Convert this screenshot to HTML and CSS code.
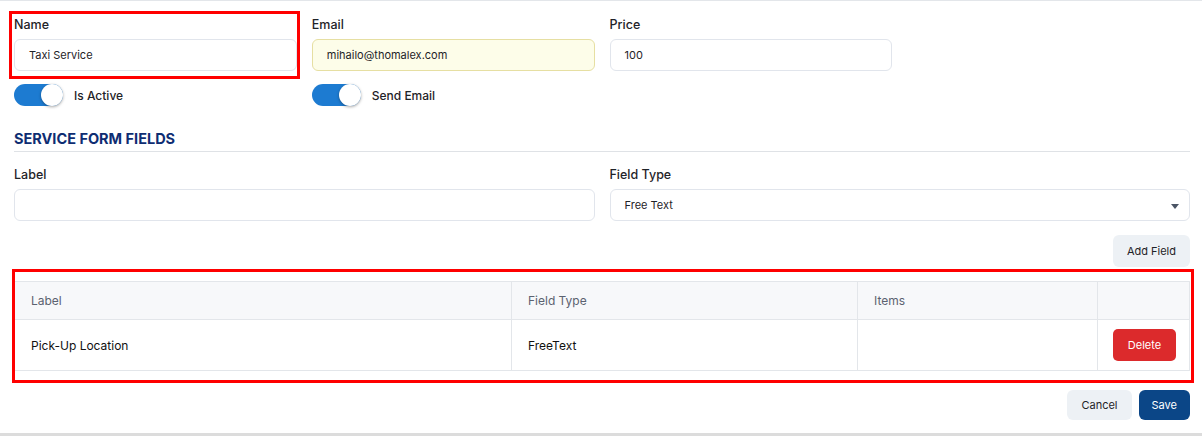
FILE: index.html
```html
<!DOCTYPE html>
<html lang="en">
<head>
    <meta charset="UTF-8">
    <title>Service</title>
    <link rel="stylesheet" href="styles.css">
</head>
<body>
    <div class="card">
        <div class="row four">
            <div class="field marked">
                <label>Name</label>
                <div class="input">Taxi Service</div>
            </div>
            <div class="field">
                <label>Email</label>
                <div class="input autofill">mihailo@thomalex.com</div>
            </div>
            <div class="field">
                <label>Price</label>
                <div class="input">100</div>
            </div>
        </div>

        <div class="row four toggles">
            <div class="switch-line"><span class="switch on"></span>Is Active</div>
            <div class="switch-line"><span class="switch on"></span>Send Email</div>
        </div>

        <h3 class="section">SERVICE FORM FIELDS</h3>

        <div class="row two">
            <div class="field">
                <label>Label</label>
                <div class="input"></div>
            </div>
            <div class="field">
                <label>Field Type</label>
                <div class="input select">Free Text<span class="caret"></span></div>
            </div>
        </div>

        <div class="actions add">
            <button class="btn light">Add Field</button>
        </div>

        <div class="table-wrap">
            <table class="grid">
                <colgroup>
                    <col style="width:497px">
                    <col style="width:346px">
                    <col style="width:240px">
                    <col>
                </colgroup>
                <thead>
                    <tr><th>Label</th><th>Field Type</th><th>Items</th><th></th></tr>
                </thead>
                <tbody>
                    <tr>
                        <td>Pick-Up Location</td>
                        <td>FreeText</td>
                        <td></td>
                        <td class="act"><button class="btn danger">Delete</button></td>
                    </tr>
                </tbody>
            </table>
        </div>

        <div class="actions footer">
            <button class="btn light">Cancel</button>
            <button class="btn primary">Save</button>
        </div>
    </div>
</body>
</html>
```

FILE: styles.css
```css
*{
    margin: 0;
    padding: 0;
    box-sizing: border-box;
}
body{
    font-family: Inter, "Noto Sans", sans-serif;
    color: #1f2328;
    background: #fff;
}
.card{
    width: 1202px;
    height: 436px;
    border-top: 1px solid #e3e6ea;
    border-bottom: 3px solid #dcdcdc;
    padding: 16px 12px 0 14px;
}
.row{
    display: grid;
    column-gap: 15px;
}
.four{
    grid-template-columns: repeat(4, 1fr);
}
.two{
    grid-template-columns: 1fr 1fr;
}
.field{
    position: relative;
}
.field label{
    display: block;
    font-size: 12.5px;
    font-weight: 500;
    line-height: 16px;
    margin-bottom: 6px;
}
.input{
    height: 32px;
    border: 1px solid #e1e5ec;
    border-radius: 6px;
    padding: 0 14px;
    font-size: 11px;
    line-height: 30px;
    color: #1f2328;
    background: #fff;
}
.autofill{
    background: #fdfde9;
    border-color: #e6dfa2;
}
.select{
    position: relative;
}
.caret{
    position: absolute;
    right: 10px;
    top: 14px;
    border-left: 4px solid transparent;
    border-right: 4px solid transparent;
    border-top: 5px solid #4b5565;
}
.marked::after{
    content: "";
    position: absolute;
    left: -5px;
    right: -3px;
    top: -6px;
    bottom: -8px;
    border: 3px solid #f00;
}
.toggles{
    margin-top: 13px;
}
.switch-line{
    display: flex;
    align-items: center;
    font-size: 12px;
    font-weight: 500;
    height: 22px;
}
.switch{
    position: relative;
    width: 49px;
    height: 22px;
    border-radius: 11px;
    background: #1d7bd1;
    margin-right: 11px;
}
.switch.on::after{
    content: "";
    position: absolute;
    right: 0;
    top: 0;
    width: 22px;
    height: 22px;
    border-radius: 50%;
    background: #fff;
    box-shadow: 0 1px 3px rgba(0,0,0,.35);
}
.section{
    margin-top: 23px;
    padding-bottom: 3px;
    border-bottom: 1px solid #dfe2e6;
    font-size: 14.5px;
    font-weight: 700;
    line-height: 19px;
    color: #0e2d72;
    margin-bottom: 15px;
}
.actions{
    display: flex;
    justify-content: flex-end;
    gap: 7px;
}
.add{
    margin-top: 14px;
}
.btn{
    border: none;
    border-radius: 6px;
    font-family: inherit;
    font-size: 11px;
    height: 32px;
    padding: 0 14px;
    cursor: pointer;
}
.btn.light{
    background: #edf1f5;
    color: #1f2328;
}
.btn.primary{
    background: #0b4687;
    color: #fff;
    padding: 0 13px;
}
.btn.danger{
    background: #dc2a2c;
    color: #fff;
    width: 63px;
    padding: 0;
    border-radius: 5px;
}
.table-wrap{
    position: relative;
    margin-top: 14px;
}
.table-wrap::after{
    content: "";
    position: absolute;
    left: -2px;
    right: -4px;
    top: -12px;
    bottom: -12px;
    border: 3px solid #f00;
}
.grid{
    width: 100%;
    table-layout: fixed;
    border-collapse: collapse;
    border: 1px solid #e3e6ea;
    font-size: 12px;
}
.grid th{
    height: 38px;
    background: #f7f8fa;
    color: #5b6270;
    font-weight: 400;
    text-align: left;
    padding: 0 16px;
    border: 1px solid #e3e6ea;
}
.grid td{
    height: 51px;
    padding: 0 16px;
    font-weight: 400;
    color: #111;
    border: 1px solid #e3e6ea;
}
.grid td.act{
    padding: 0 15px;
    text-align: right;
}
.footer{
    margin-top: 19px;
}
.footer .btn{
    height: 30px;
}
```
